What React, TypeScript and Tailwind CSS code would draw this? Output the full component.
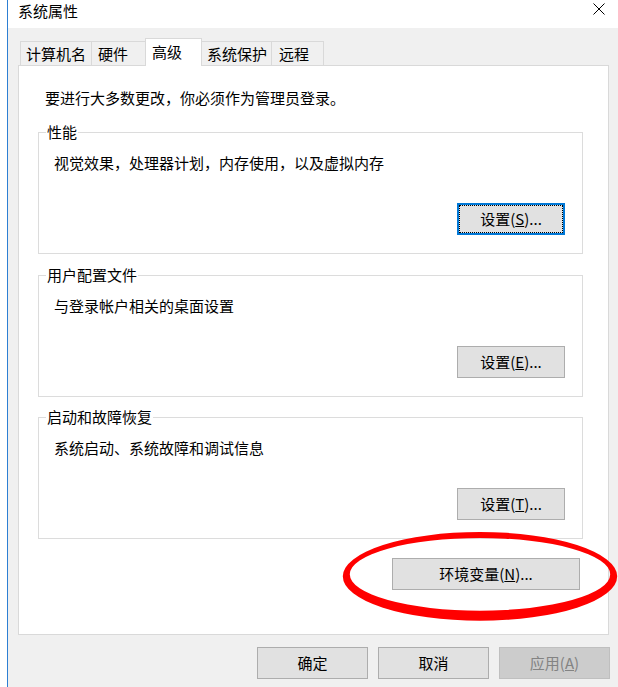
import React from "react";

const FONT = { fontFamily: '"Noto Sans CJK SC", "Noto Sans", sans-serif' };

function Btn({
  children,
  className = "",
  disabled = false,
  focused = false,
}: {
  children: React.ReactNode;
  className?: string;
  disabled?: boolean;
  focused?: boolean;
}) {
  if (focused) {
    return (
      <div className={`h-[32px] border-2 border-[#0078d7] bg-[#e1e1e1] flex ${className}`}>
        <div className="flex-1 border border-dotted border-black flex items-center justify-center text-[15px] leading-[20px] text-black">
          {children}
        </div>
      </div>
    );
  }
  return (
    <div
      className={`h-[32px] border flex items-center justify-center text-[15px] leading-[20px] ${
        disabled
          ? "bg-[#cccccc] border-[#bfbfbf] text-[#838383]"
          : "bg-[#e1e1e1] border-[#adadad] text-black"
      } ${className}`}
    >
      {children}
    </div>
  );
}

function Group({
  title,
  text,
  button,
  className = "",
}: {
  title: string;
  text: string;
  button: React.ReactNode;
  className?: string;
}) {
  return (
    <fieldset className={`w-[545px] border border-[#dcdcdc] m-0 p-0 ${className}`}>
      <legend className="ml-[7px] px-[1px] text-[15px] leading-[20px] text-black">{title}</legend>
      <div className="pl-[15px] pr-[17px] pb-[18px] flex flex-col">
        <div className="mt-[11px] text-[15px] leading-[20px] text-black">{text}</div>
        <div className="mt-[30px] flex justify-end">{button}</div>
      </div>
    </fieldset>
  );
}

export default function App() {
  return (
    <div className="relative flex w-[618px] h-[687px] bg-white overflow-hidden" style={FONT}>
      <div className="w-[7px] bg-white" />
      <div className="w-px bg-[#2d7fd3]" />
      <div className="flex-1 flex flex-col">
        {/* title bar */}
        <div className="h-[28px] bg-white flex items-start">
          <div className="pl-[10px] pt-[1px] text-[15px] leading-[20px] text-black">系统属性</div>
          <svg className="ml-auto mr-[13px] mt-[3px]" width="12" height="12" viewBox="0 0 12 12">
            <path d="M0.5 0.5 L11.5 11.5 M11.5 0.5 L0.5 11.5" stroke="#000" strokeWidth="1" fill="none" />
          </svg>
        </div>
        {/* body */}
        <div className="flex-1 bg-[#f0f0f0] flex flex-col pl-[10px] pt-[10px]">
          {/* tabs */}
          <div className="relative z-10 h-[28px] -mb-px flex items-start pl-[2px] text-[15px] leading-[20px] text-black">
            <div className="mt-[3px] h-[24px] w-[71px] border-l border-t border-[#d9d9d9] flex items-center pl-[5px]">计算机名</div>
            <div className="mt-[3px] h-[24px] w-[54px] border-l border-t border-[#d9d9d9] flex items-center pl-[6px]">硬件</div>
            <div className="h-[28px] w-[57px] border-l border-t border-r border-[#d9d9d9] bg-white flex items-center pl-[6px] pb-[2px]">高级</div>
            <div className="mt-[3px] h-[24px] w-[69px] border-t border-[#d9d9d9] flex items-center pl-[5px]">系统保护</div>
            <div className="mt-[3px] h-[24px] w-[53px] border-l border-t border-r border-[#d9d9d9] flex items-center pl-[7px]">远程</div>
          </div>
          {/* panel */}
          <div className="w-[591px] h-[570px] border border-[#d9d9d9] bg-white flex flex-col pl-[19px] pt-[22px]">
            <div className="ml-[7px] text-[15px] leading-[20px] text-black">要进行大多数更改，你必须作为管理员登录。</div>
            <Group
              className="mt-[14px]"
              title="性能"
              text="视觉效果，处理器计划，内存使用，以及虚拟内存"
              button={
                <Btn focused className="w-[108px]">
                  <span>
                    设置(<span className="underline">S</span>)...
                  </span>
                </Btn>
              }
            />
            <Group
              className="mt-[11px]"
              title="用户配置文件"
              text="与登录帐户相关的桌面设置"
              button={
                <Btn className="w-[108px]">
                  <span>
                    设置(<span className="underline">E</span>)...
                  </span>
                </Btn>
              }
            />
            <Group
              className="mt-[10px]"
              title="启动和故障恢复"
              text="系统启动、系统故障和调试信息"
              button={
                <Btn className="w-[108px]">
                  <span>
                    设置(<span className="underline">T</span>)...
                  </span>
                </Btn>
              }
            />
            <div className="mt-[19px] flex justify-end pr-[28px]">
              <Btn className="w-[188px]">
                <span>
                  环境变量(<span className="underline">N</span>)...
                </span>
              </Btn>
            </div>
          </div>
          {/* bottom buttons */}
          <div className="mt-[12px] flex justify-end gap-[10px] pr-[8px]">
            <Btn className="w-[111px]">确定</Btn>
            <Btn className="w-[111px]">取消</Btn>
            <Btn disabled className="w-[111px]">
              <span>
                应用(<span className="underline">A</span>)
              </span>
            </Btn>
          </div>
        </div>
      </div>
      {/* red annotation ellipse */}
      <svg
        className="absolute left-0 top-0 pointer-events-none"
        width="618"
        height="687"
        viewBox="0 0 618 687"
      >
        <path
          fillRule="evenodd"
          fill="#ff0000"
          d="M342.8,576.35 a137.2,44.35 0 1,0 274.4,0 a137.2,44.35 0 1,0 -274.4,0Z M349.8,574.35 a130.2,36.35 0 1,0 260.4,0 a130.2,36.35 0 1,0 -260.4,0Z"
        />
      </svg>
    </div>
  );
}
